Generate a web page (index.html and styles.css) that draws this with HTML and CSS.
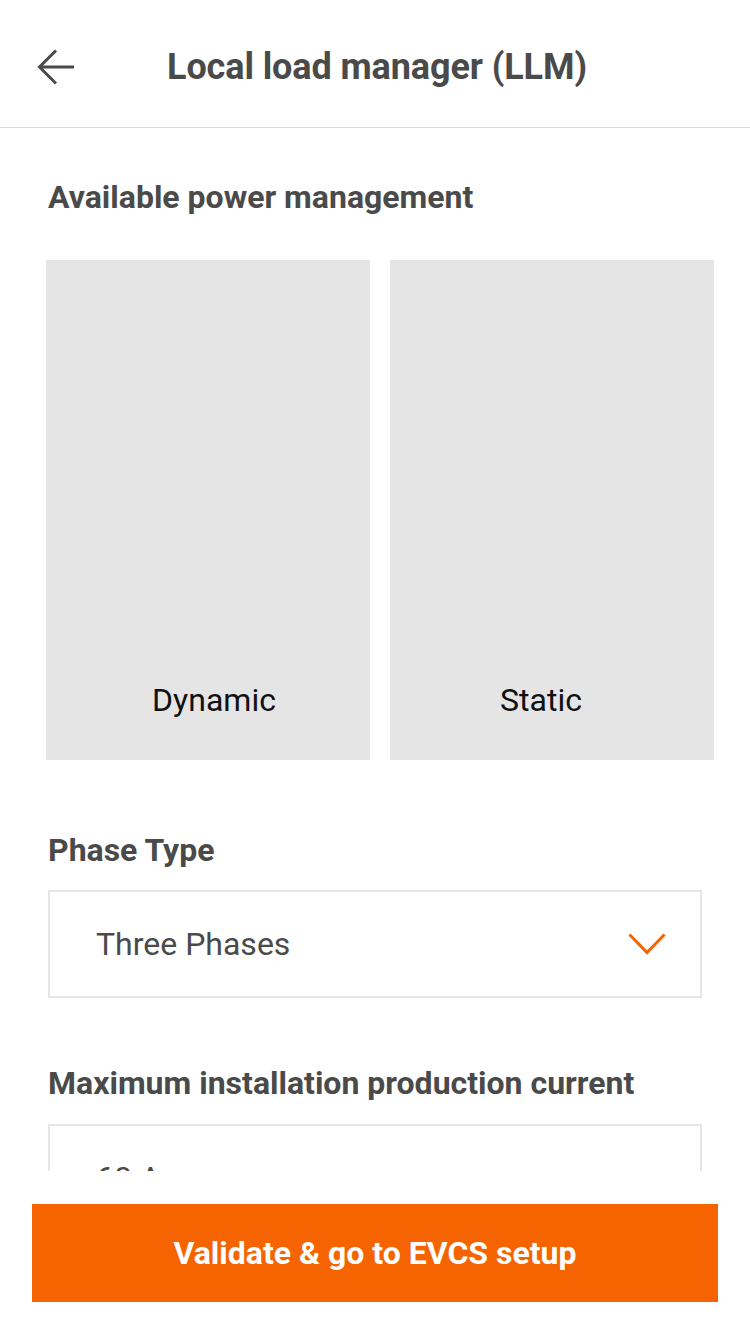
FILE: index.html
```html
<!DOCTYPE html>
<html lang="en">
<head>
<meta charset="utf-8">
<title>Local load manager (LLM)</title>
<link rel="stylesheet" href="styles.css">
</head>
<body>
<div class="screen">
  <header class="topbar">
    <button class="back" aria-label="Back">
      <svg width="38" height="36" viewBox="0 0 38 36" fill="none" stroke="#4a4a4a" stroke-width="3" stroke-linecap="butt" stroke-linejoin="miter">
        <path d="M37 18H3"/>
        <path d="M19 1.5L2.5 18L19 34.5"/>
      </svg>
    </button>
    <h1 class="title">Local load manager (LLM)</h1>
  </header>
  <main class="content">
    <h2 class="section-title first">Available power management</h2>
    <div class="cards">
      <div class="card card-dynamic"><span class="card-label">Dynamic</span></div>
      <div class="card card-static"><span class="card-label">Static</span></div>
    </div>
    <h2 class="section-title phase">Phase Type</h2>
    <div class="field select">
      <span class="field-value">Three Phases</span>
      <svg class="chevron" width="38" height="22" viewBox="0 0 38 22" fill="none" stroke="#f56400" stroke-width="3">
        <path d="M1.5 1.5L19 19.5L36.5 1.5"/>
      </svg>
    </div>
    <h2 class="section-title maxcur">Maximum installation production current</h2>
    <div class="field input">
      <span class="field-value">60 A</span>
    </div>
  </main>
  <footer class="footer">
    <button class="primary">Validate &amp; go to EVCS setup</button>
  </footer>
</div>
</body>
</html>
```
FILE: styles.css
```css
* { box-sizing: border-box; }
html, body { margin: 0; padding: 0; background: #fff; }
body { font-family: Roboto, "Liberation Sans", sans-serif; color: #4a4a4a; }
.screen { width: 750px; height: 1334px; display: flex; flex-direction: column; overflow: hidden; }

.topbar {
  height: 128px; flex: none; display: flex; align-items: center;
  border-bottom: 1px solid #dcdcdc; padding: 7px 0 0 37px;
}
.back { background: none; border: 0; padding: 0; width: 38px; height: 36px; display: flex; }
.title {
  margin: 0 0 0 92px; font-size: 36px; font-weight: 700; color: #4a4a4a; letter-spacing: -0.1px;
}

.content { flex: 1; overflow: hidden; padding: 0 48px; display: flex; flex-direction: column; }
.section-title { margin: 0; font-size: 32px; font-weight: 700; color: #4a4a4a; line-height: 36px; }
.first { margin-top: 51px; }

.cards { display: grid; grid-template-columns: 1fr 1fr; gap: 20px; margin: 45px -12px 0 -2px; }
.card {
  background: #e5e5e5; height: 500px; display: flex; align-items: flex-end; justify-content: center;
  padding-bottom: 42px;
}
.card-dynamic { padding-left: 12px; }
.card-static { padding-right: 22px; }
.card-label { font-size: 32px; color: #111; line-height: 36px; }

.phase { margin-top: 72px; }
.field {
  border: 2px solid #e6e6e6; height: 108px; flex: none; display: flex; align-items: center;
  padding: 0 34px 0 46px; justify-content: space-between;
}
.select { margin-top: 22px; }
.field-value { font-size: 32px; color: #4a4a4a; }
.maxcur { margin-top: 67px; }
.input { margin-top: 23px; }

.footer { flex: none; height: 163px; padding: 33px 32px 32px; }
.primary {
  width: 100%; height: 98px; border: 0; background: #f56400; color: #fff;
  font-family: Roboto, "Liberation Sans", sans-serif; font-size: 32px; font-weight: 700;
}
```
